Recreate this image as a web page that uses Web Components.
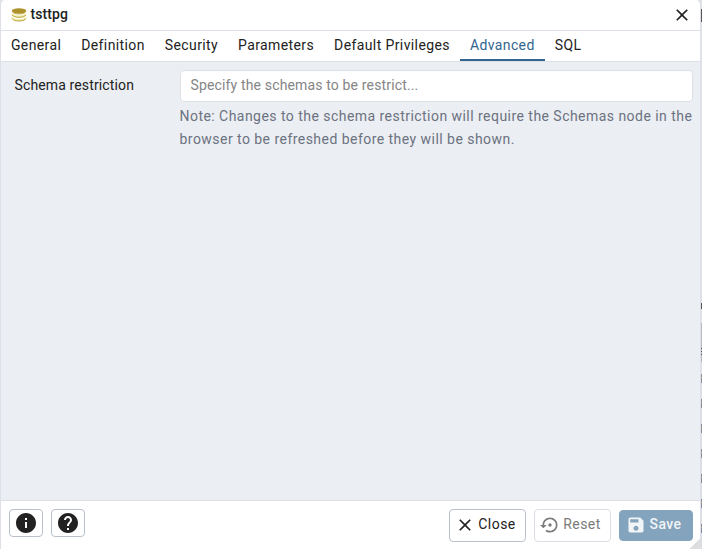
<!DOCTYPE html>
<html lang="en">
<head>
<meta charset="utf-8">
<title>tsttpg</title>
<style>
html, body { margin: 0; height: 100%; overflow: hidden; }
body { font: 14px/21px Roboto, "Liberation Sans", sans-serif; letter-spacing: .39px; color: #222; background: #dfe2e6; }
</style>
</head>
<body>
<object-dialog></object-dialog>
<script>
const define = (name, html) => customElements.define(name, class extends HTMLElement {
  connectedCallback() {
    if (this.shadowRoot) return;
    const t = document.createElement('template');
    t.innerHTML = html;
    this.attachShadow({ mode: 'open' }).append(t.content.cloneNode(true));
  }
});

const paths = {
  close: '<path d="M19 6.41 17.59 5 12 10.59 6.41 5 5 6.41 10.59 12 5 17.59 6.41 19 12 13.41 17.59 19 19 17.59 13.41 12z"/>',
  info: '<path d="M12 2C6.48 2 2 6.48 2 12s4.48 10 10 10 10-4.48 10-10S17.52 2 12 2zm1 15h-2v-6h2v6zm0-8h-2V7h2v2z"/>',
  help: '<path d="M12 2C6.48 2 2 6.48 2 12s4.48 10 10 10 10-4.48 10-10S17.52 2 12 2zm1 17h-2v-2h2v2zm2.07-7.75-.9.92C13.45 12.9 13 13.5 13 15h-2v-.5c0-1.1.45-2.1 1.17-2.83l1.24-1.26c.37-.36.59-.86.59-1.41 0-1.1-.9-2-2-2s-2 .9-2 2H8c0-2.21 1.79-4 4-4s4 1.79 4 4c0 .88-.36 1.68-.93 2.25z"/>',
  reset: '<path d="M14 12c0-1.1-.9-2-2-2s-2 .9-2 2 .9 2 2 2 2-.9 2-2zm-2-9c-4.97 0-9 4.03-9 9H0l4 4 4-4H5c0-3.87 3.13-7 7-7s7 3.13 7 7-3.13 7-7 7c-1.51 0-2.91-.49-4.06-1.3l-1.42 1.44C8.04 20.3 9.94 21 12 21c4.97 0 9-4.03 9-9s-4.03-9-9-9z"/>',
  save: '<path d="M17 3H5c-1.11 0-2 .9-2 2v14c0 1.1.89 2 2 2h14c1.1 0 2-.9 2-2V7l-4-4zm-5 16c-1.66 0-3-1.34-3-3s1.34-3 3-3 3 1.34 3 3-1.34 3-3 3zm3-10H5V5h10v4z"/>',
  database: '<g fill="none" stroke-linecap="round"><path d="M2.200 16.800c2 3.900 17.600 3.900 19.600 0M2.200 11.300c2 3.900 17.600 3.900 19.600 0" stroke="#f5eda8" stroke-width="3"/><path d="M2 18c2 4.100 18 4.100 20 0M2 12.500c2 4.100 18 4.100 20 0M2 7.500c2 4 18 4 20 0" stroke="#b89f3a" stroke-width="1.400"/></g><ellipse cx="12" cy="5.800" rx="10.800" ry="3.800" fill="#ad922c"/>'
};
customElements.define('ui-icon', class extends HTMLElement {
  connectedCallback() {
    if (this.shadowRoot) return;
    this.attachShadow({ mode: 'open' }).innerHTML =
      `<style>:host{display:block;flex:none;width:var(--size,20px);height:var(--size,20px)}svg{display:block;width:100%;height:100%;fill:currentColor}</style>
       <svg viewBox="0 0 24 24">${paths[this.getAttribute('name')]}</svg>`;
  }
});

define('title-bar', `
<style>
:host{display:flex;align-items:center;height:30px;padding:0 8px 0 10px;border-bottom:1px solid #dde0e6;background:#fff}
.db{--size:16px;margin-right:3.500px}
.name{flex:1;font-weight:500;letter-spacing:.1px;line-height:28px;padding-bottom:2px}
.x{--size:20px}
</style>
<ui-icon class="db" name="database"></ui-icon><span class="name"><slot></slot></span><ui-icon class="x" name="close"></ui-icon>`);

define('tab-bar', `
<style>:host{display:flex;height:30px;border-bottom:1px solid #dde0e6;background:#fff}</style><slot></slot>`);

define('tab-item', `
<style>
:host{display:block;box-sizing:border-box;height:30px;padding:4px 10.1px 0 9.9px;white-space:nowrap}
:host([selected]){color:#326690;border-bottom:2px solid #326690}
</style><slot></slot>`);

define('form-field', `
<style>
:host{display:grid;grid-template-columns:165.500px minmax(0,1fr);padding:8px 7px 0 13.500px;align-items:start}
.label{padding-top:5px;letter-spacing:.13px}
.box{box-sizing:border-box;height:32px;padding:4px 9.500px;border:1px solid #dde0e6;border-radius:4px;background:#fff;color:#858585;letter-spacing:.15px}
.note{color:#6b7280;line-height:23px;padding-top:3px;margin-left:-.5px;white-space:nowrap;letter-spacing:.46px}
</style>
<div class="label"><slot name="label"></slot></div>
<div><div class="box"><slot name="placeholder"></slot></div><div class="note"><slot name="note"></slot></div></div>`);

define('ui-button', `
<style>
:host{display:flex;box-sizing:border-box;align-items:center;justify-content:center;width:77px;height:33px;gap:3px;border:1px solid #bac1cd;border-radius:4px;background:#fff;padding:0 4px 2px 0;letter-spacing:.45px;white-space:nowrap}
:host([kind=icon]){width:34px;height:28px;--size:24px;padding:0}
:host([kind=disabled]){border-color:#dbdee5;color:#7b7b7b}
:host([kind=primary]){width:74px;height:31px;margin-top:1px;background:#84a3bc;border-color:#84a3bc;color:#f1f5f8;font-weight:500}
::slotted(ui-icon){position:relative;top:.5px}
:host([kind=icon]) ::slotted(ui-icon){top:0}
</style><slot></slot>`);

define('dialog-footer', `
<style>
:host{display:flex;box-sizing:border-box;height:49px;padding:8px 7px 0 8px;gap:8px;border-top:1px solid #dde0e6;background:#fff;align-items:flex-start}
.space{flex:1}
</style><slot name="start"></slot><span class="space"></span><slot></slot>`);

define('object-dialog', `
<style>
:host{display:grid;grid-template-columns:701px 1px;height:549px}
.dialog{position:relative;box-sizing:border-box;display:flex;flex-direction:column;border:solid #dde0e6;border-width:0 1px;border-radius:5px 5px 0 0;overflow:hidden}
.body{flex:1;background:#ebeef3}
.edge{background:
 linear-gradient(#555,#555) 0 9px/1px 13px no-repeat,
 linear-gradient(#555,#555) 0 303px/1px 6px no-repeat,
 repeating-linear-gradient(#555 0 1px,#bbb 1px 3px) 0 348px/1px 7px no-repeat,
 linear-gradient(#b6bac2,#b6bac2) 0 323px/1px 39px no-repeat,
 repeating-linear-gradient(#858e9e 0 3px,#c5a579 3px 4px,#858e9e 4px 9px,#d9dde2 9px 25px) 0 374px/1px 175px no-repeat,#dfe2e6}
.grip{position:absolute;right:0;bottom:0;width:10px;height:10px;background:linear-gradient(135deg,transparent 50%,#dedede 50%)}
</style>
<div class="dialog">
  <title-bar>tsttpg</title-bar>
  <tab-bar>
    <tab-item>General</tab-item><tab-item>Definition</tab-item><tab-item>Security</tab-item><tab-item>Parameters</tab-item><tab-item>Default Privileges</tab-item><tab-item selected>Advanced</tab-item><tab-item>SQL</tab-item>
  </tab-bar>
  <div class="body">
    <form-field>
      <span slot="label">Schema restriction</span>
      <span slot="placeholder">Specify the schemas to be restrict...</span>
      <span slot="note">Note: Changes to the schema restriction will require the Schemas node in the<br>browser to be refreshed before they will be shown.</span>
    </form-field>
  </div>
  <dialog-footer>
    <ui-button slot="start" kind="icon"><ui-icon name="info"></ui-icon></ui-button>
    <ui-button slot="start" kind="icon"><ui-icon name="help"></ui-icon></ui-button>
    <ui-button><ui-icon name="close"></ui-icon><span>Close</span></ui-button>
    <ui-button kind="disabled"><ui-icon name="reset"></ui-icon><span>Reset</span></ui-button>
    <ui-button kind="primary"><ui-icon name="save"></ui-icon><span>Save</span></ui-button>
  </dialog-footer>
  <div class="grip"></div>
</div>
<div class="edge"></div>`);
</script>
</body>
</html>
